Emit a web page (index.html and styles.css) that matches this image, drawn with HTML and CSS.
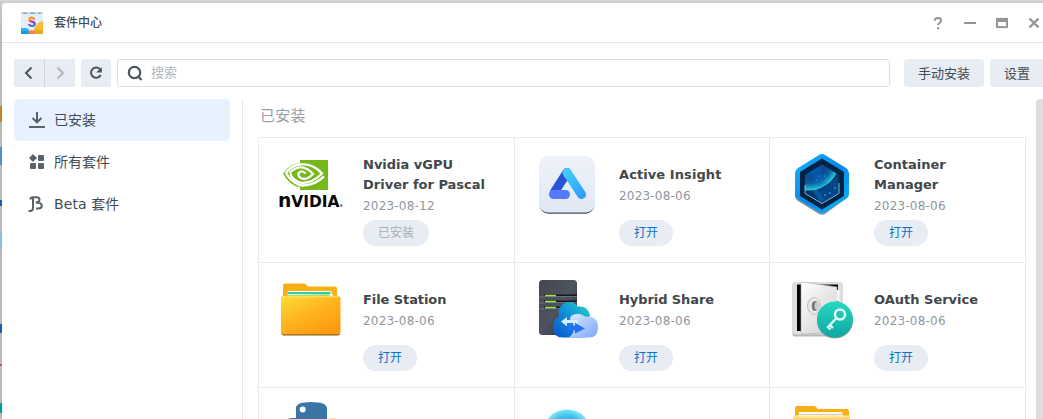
FILE: index.html
```html
<!DOCTYPE html>
<html lang="zh-CN">
<head>
<meta charset="utf-8">
<title>套件中心</title>
<link rel="stylesheet" href="styles.css">
</head>
<body>
<div class="desktop">
  <i class="peek p1"></i><i class="peek p2"></i><i class="peek p3"></i><i class="peek p4"></i><i class="peek p5"></i><i class="peek p6"></i><i class="peek p7"></i>
  <main class="window">
    <header class="titlebar">
      <svg class="app-icon" viewBox="0 0 22 22">
        <defs><linearGradient id="s" gradientUnits="userSpaceOnUse" x1="8" y1="4" x2="13" y2="15"><stop offset="0" stop-color="#f45743"/><stop offset=".25" stop-color="#ffb000"/><stop offset=".5" stop-color="#e62c91"/><stop offset=".75" stop-color="#6548e8"/><stop offset="1" stop-color="#13b9dc"/></linearGradient></defs>
        <rect width="22" height="22" rx="1" fill="#e3f0f9"/><path d="M0 1h22" stroke="#b5cfda"/><path d="M2 1.200h4M9 1.200h5M17 1.200h3" stroke="#6f909f"/>
        <path d="M22 9q-6 1-9 8v2h9z" fill="#fdbb32"/><path d="M0 16.500q4-2 8 1l1 4.500H0z" fill="#28b7ed"/><path d="M7.500 19q3-1.500 7 0v3h-7z" fill="#ff8045"/><path d="M13 18.500q4-1.500 9 0V22h-7z" fill="#e5a823"/><path d="M0 19h7l1 3H0z" fill="#159bdc"/>
        <path d="M13.500 7.400Q12.800 5.600 10.800 5.600 8.300 5.600 8.300 7.500 8.300 9.100 11 9.600 13.700 10.100 13.700 12 13.700 14 11 14 8.600 14 8 12" fill="none" stroke="url(#s)" stroke-width="2.200"/>
      </svg>
      <h1>套件中心</h1>
      <svg class="controls" viewBox="0 0 112 20" fill="none" stroke="#929699" stroke-width="2">
        <path d="M3.800 7.700Q3.800 4.900 7 4.900 10.200 4.900 10.200 7.400 10.200 8.900 8.600 9.800 7.100 10.700 7.100 12.200M7.100 14v2.200"/><path d="M33 10h12"/><rect x="66" y="5.900" width="10" height="8.200"/><path d="M65 7h12" stroke-width="4"/><path d="M98.500 5.500l9 9M107.500 5.500l-9 9" stroke-width="2.400"/>
      </svg>
    </header>
    <nav class="toolbar">
      <div class="history">
        <button><svg viewBox="0 0 30 28"><path d="M17.500 8.500L12 14l5.500 5.500"/></svg></button>
        <button class="off"><svg viewBox="0 0 30 28"><path d="M12.500 8.500L18 14l-5.500 5.500"/></svg></button>
      </div>
      <button class="refresh"><svg viewBox="0 0 30 28"><path d="M18.900 10.200A5.100 5.100 0 1 0 19.700 16"/><path class="solid" d="M20.800 7.900v5.500h-5.600z"/></svg></button>
      <label class="search"><svg viewBox="0 0 18 18"><circle cx="8.500" cy="8.500" r="5.700"/><path d="M12.500 12.700l3 3.200"/></svg><span>搜索</span></label>
      <button class="manual">手动安装</button><button class="settings">设置</button>
    </nav>
    <div class="body">
      <aside>
        <a class="nav active"><svg viewBox="0 0 18 18"><path d="M9 1v10M4.600 7L9 11.400 13.400 7M1 15.900h16"/></svg><span>已安装</span></a>
        <a class="nav"><svg viewBox="0 0 18 18"><path class="fill" d="M5 1l4 4-4 4-4-4zM11 2h4q1 0 1 1v4q0 1-1 1h-4q-1 0-1-1V3q0-1 1-1zM3 10h4q1 0 1 1v4q0 1-1 1H3q-1 0-1-1v-4q0-1 1-1zM11 10h4q1 0 1 1v4q0 1-1 1h-4q-1 0-1-1v-4q0-1 1-1z"/></svg><span>所有套件</span></a>
        <a class="nav"><svg viewBox="0 0 18 18"><path d="M.5 15.900H2q3 0 3-3V2.200M2.500 4.500q0-2.300 2.500-2.300h3.800q2.700 0 2.700 2.500 0 2.800-3.700 2.800 6 0 6 3.200 0 2.800-3.500 2.800H8"/></svg><span class="beta">Beta 套件</span></a>
      </aside>
      <section class="content">
        <h2>已安装</h2>
        <div class="grid">
          <article class="card">
            <svg class="logo" viewBox="0 0 64 64">
              <path d="M21 8h28v30H21z" fill="#76b71b"/>
              <path d="M4 21.500Q11 11.500 21 11v24.500Q10 33 4 21.500z" fill="#76b71b"/>
              <g fill="none" stroke="#fff"><path d="M21 12.500Q34 11 43 21.500 33 31.500 22 31 13 28 11.300 21.500" stroke-width="2.300"/><path d="M21 12.200Q12 13.500 7 21q4.500 8.500 14 12.300 14 1 24-9" stroke-width="2.500"/><path d="M10.500 21Q19 12.500 28 17q4 2.200 6 5-7 7-12.300 4-3.200-2.200-2-5 3.300-3.500 7 .5" stroke-width="2.200"/></g>
              <text class="wordmark" x="-1" y="54.700" textLength="61.500" lengthAdjust="spacingAndGlyphs"><tspan class="small">n</tspan>VIDIA</text><circle cx="62.300" cy="53.500" r="1.200" fill="#666"/>
            </svg>
            <div class="info"><div class="text"><h3>Nvidia vGPU<br>Driver for Pascal</h3><time>2023-08-12</time></div><button class="pill disabled">已安装</button></div>
          </article>
          <article class="card">
            <svg class="logo" viewBox="0 0 64 64">
              <defs><linearGradient id="tile" x2="0" y2="1"><stop stop-color="#eff3f9"/><stop offset="1" stop-color="#dfe8f5"/></linearGradient><linearGradient id="al" x2="1" y2="1"><stop stop-color="#43cdfa"/><stop offset="1" stop-color="#319eff"/></linearGradient></defs>
              <rect x="4.500" y="6" width="55" height="55.700" rx="9" fill="#454e59"/><rect x="4" y="4" width="56" height="56.500" rx="9" fill="url(#tile)"/>
              <g fill="none" stroke-linecap="round" stroke-width="9"><path d="M32 20.500L19.500 40" stroke="#2854d5"/><path d="M18.500 42.500h12" stroke="#537aff"/><path d="M32 20.500L46.500 42.500" stroke="url(#al)"/></g>
            </svg>
            <div class="info"><div class="text"><h3 class="ai">Active Insight</h3><time>2023-08-06</time></div><button class="pill">打开</button></div>
          </article>
          <article class="card">
            <svg class="logo" viewBox="0 0 64 64">
              <defs><linearGradient id="hex" x2="1" y2="1"><stop stop-color="#17b8fa"/><stop offset=".5" stop-color="#0686ed"/><stop offset="1" stop-color="#10b9f1"/></linearGradient><radialGradient id="orb" gradientUnits="userSpaceOnUse" cx="19" cy="8" r="31"><stop stop-color="#0867c8"/><stop offset=".55" stop-color="#084a96"/><stop offset=".76" stop-color="#0b60a2"/><stop offset="1" stop-color="#22dadd"/></radialGradient><clipPath id="hc"><path d="M32 13l17 10v18L32 51 15 41V23z"/></clipPath></defs>
              <path d="M32 4.500l24 14q3 2 3 5v18q0 3-3 5L35 62q-3 1.500-6 0L8 49q-3-2-3-5V22z" fill="#244c70" opacity=".6"/>
              <path d="M29 3q3-2 6 0l21 13q3 2 3 5v21q0 3-3 5L35 60q-3 2-6 0L8 47q-3-2-3-5V21q0-3 3-5z" fill="url(#hex)"/>
              <path d="M32 6.500l22 13.500v24L32 57.500 10 44V20z" fill="#032342"/><path d="M32 12l17 10.500v19L32 51.500 15 41.500v-19z" fill="#063468"/>
              <g clip-path="url(#hc)"><path d="M30 39l17-14 3 18-18 9z" fill="#074589"/><path d="M22 38l8 12 4-2-6-11z" fill="#0a579d"/><circle cx="19" cy="8" r="30.500" fill="url(#orb)"/><path d="M19 19l10-5 8 18-8 4z" fill="#0870c8" opacity=".25"/></g>
              <path d="M15 33v8.500l17 10 17-10V31" fill="none" stroke="#7ab6df"/><g fill="#39c7ff"><circle cx="29" cy="24" r=".6"/><circle cx="35" cy="24" r=".6"/><circle cx="27" cy="28" r=".6"/><circle cx="40" cy="41" r=".8"/><circle cx="45" cy="36" r=".8"/><circle cx="35" cy="43" r=".8"/></g>
            </svg>
            <div class="info"><div class="text"><h3 class="cm">Container<br>Manager</h3><time>2023-08-06</time></div><button class="pill">打开</button></div>
          </article>
          <article class="card">
            <svg class="logo" viewBox="0 0 64 64">
              <defs><linearGradient id="fold" x2=".7" y2="1"><stop stop-color="#ffdd38"/><stop offset=".5" stop-color="#ffb51f"/><stop offset="1" stop-color="#fe9a11"/></linearGradient></defs>
              <path d="M4 8.500Q4 6.500 6 6.500h19q2 0 3 2l1 1h27q2 0 2 2v18H4z" fill="#faae18"/><path d="M9 14h43l3 7H8z" fill="#f1fff0"/><path d="M9 15h43l-1 2H8z" fill="#35cba2"/><path d="M8 18l42-1 2 3H8z" fill="#a8dd76"/>
              <rect x="2.500" y="20.500" width="58.500" height="38" rx="2" fill="#91631c"/><rect x="2" y="19.200" width="59.500" height="38" rx="2" fill="url(#fold)"/><path d="M4 19.800h55" stroke="#ffe36a"/>
            </svg>
            <div class="info"><div class="text"><h3 class="fs">File Station</h3><time>2023-08-06</time></div><button class="pill">打开</button></div>
          </article>
          <article class="card">
            <svg class="logo" viewBox="0 0 64 64">
              <defs><linearGradient id="server" x2="1" y2="1"><stop stop-color="#40454e"/><stop offset=".5" stop-color="#4e5361"/><stop offset="1" stop-color="#292c36"/></linearGradient><linearGradient id="c1" x1="1" x2="0" y2="1"><stop stop-color="#25d8c4"/><stop offset=".45" stop-color="#1294d9"/><stop offset="1" stop-color="#0753c9"/></linearGradient><linearGradient id="c2" x2="1" y2="1"><stop stop-color="#d9eaff"/><stop offset="1" stop-color="#7ca6fd"/></linearGradient></defs>
              <rect x="4" y="3" width="38" height="55" rx="3.500" fill="url(#server)"/><path d="M9 18.500h33M9 24.500h33M9 30.500h33" stroke="#14171d" stroke-width="2"/><path d="M4 20h5l1.500-.5h31.500M4 26h5l1.500-.5h31.500M4 32h5l1.500-.5h31.500" fill="none" stroke="#7b818b" stroke-width=".8"/><path d="M10 18.500h11M10 24.500h11M10 30.500h11" stroke="#9bea35" stroke-width="1.500"/>
              <path d="M28 60.500q-10 0-10-10 0-8 6-11-2-9 5-13 8-4 14 3 10-1 12 9l-4 22z" fill="url(#c1)"/><path d="M34 60.500q5-4 5-9 0-6-4-9 0-4 4-5 6-2 11 2 13-1 13 11 0 10-9 10z" fill="url(#c2)"/><path d="M26 44.500l6-4.500v3h11v3H32v3.500z" fill="#d9ecff"/><path d="M31 49h9v-3l10 5.500-10 5V53h-9z" fill="#2170f4"/>
            </svg>
            <div class="info"><div class="text"><h3 class="hs">Hybrid Share</h3><time>2023-08-06</time></div><button class="pill">打开</button></div>
          </article>
          <article class="card">
            <svg class="logo" viewBox="0 0 64 64">
              <defs><linearGradient id="safe" x2="1" y2="1"><stop stop-color="#fff"/><stop offset="1" stop-color="#cecece"/></linearGradient><linearGradient id="badge" x2="0" y2="1"><stop stop-color="#25dac1"/><stop offset="1" stop-color="#0fa6a2"/></linearGradient></defs>
              <rect x="2.500" y="5.500" width="50" height="54" rx="2.500" fill="#b8b8b8"/><rect x="3" y="5" width="49" height="52.500" rx="2" fill="#dedede"/><path d="M7 7.500h41V54H7z" fill="#080808"/><path d="M11 7q0-2 2-2l34 5v45l-33 2q-3 0-3-3z" fill="url(#safe)" stroke="#aaa" stroke-width=".6"/><path d="M48 13v11" stroke="#f5f5f5" stroke-width="3"/><ellipse cx="24" cy="29" rx="6.500" ry="8.500" fill="#e5e5e5" stroke="#c2c2c2"/><ellipse cx="25" cy="29" rx="4" ry="5.500" fill="#777" stroke="#fff"/><ellipse cx="27" cy="29" rx="2.500" ry="4" fill="#ccc"/>
              <circle cx="45" cy="43.500" r="18" fill="#546d6b" opacity=".6"/><circle cx="45" cy="42.500" r="18" fill="url(#badge)"/><g fill="none" stroke="#e3fffc" stroke-width="2.400"><circle cx="50" cy="37.500" r="5"/><path d="M46.500 41L37 51m3-3l3 3m-5-1l2.500 2.500"/></g>
            </svg>
            <div class="info"><div class="text"><h3 class="oauth">OAuth Service</h3><time>2023-08-06</time></div><button class="pill">打开</button></div>
          </article>
          <article class="card"><svg class="logo" viewBox="0 0 64 64"><path d="M17 18V6Q17 0 32 0T48 6v22H17z" fill="#3b75a8"/><path d="M8 17.500q2-1.500 6-1.500h18v2H8z" fill="#3b75a8"/><path d="M50 16h7v4h-7z" fill="#ffe58b"/><circle cx="23.700" cy="7.500" r="3" fill="#fff"/></svg></article>
          <article class="card"><svg class="logo" viewBox="0 0 64 64"><defs><radialGradient id="ring"><stop stop-color="#1bb7ed"/><stop offset=".7" stop-color="#32bdee"/><stop offset="1" stop-color="#7be7f7"/></radialGradient></defs><circle cx="32" cy="32" r="24.500" fill="url(#ring)"/></svg></article>
          <article class="card"><svg class="logo" viewBox="0 0 64 64"><path d="M5 6q0-2 2-2h17q2 0 3 2l1 1h29q2 0 2 2v20H5z" fill="#faae18"/><path d="M9 10h43l2 6H8z" fill="#fffbed"/><path d="M8 12.500h45" stroke="#d8d0b5"/><path d="M3 15.500h57V50H3z" fill="#ffd23e"/><path d="M3 14.500h57" stroke="#ffeb8a" stroke-width="2"/></svg></article>
        </div>
      </section>
      <div class="scrollbar"></div>
    </div>
  </main>
</div>
</body>
</html>
```
FILE: styles.css
```css
* { box-sizing: border-box; }
body { margin: 0; overflow: hidden; font-family: "DejaVu Sans", "Noto Sans CJK SC", sans-serif; color: #414b55; }
h1, h2, h3 { margin: 0; font-weight: normal; }
button { border: 0; padding: 0; color: inherit; font: inherit; background: #e8edf3; }
svg { display: block; flex: none; }
.desktop { position: relative; height: 419px; padding: 3px 0 0 2px; background: linear-gradient(#d9d9d9, #c9c9c9 3px, #b9b9b9 40px); overflow: hidden; }
.peek { position: absolute; left: 0; width: 2px; background: #558bcf; }
.p1 { top: 106px; height: 16px; background: #bd872d; } .p2 { top: 147px; height: 18px; }
.p3 { top: 200px; height: 6px; background: #185bb0; } .p4 { top: 232px; height: 17px; background: #8bbedd; }
.p5 { top: 324px; height: 9px; background: #185bc2; } .p6 { top: 364px; height: 2px; background: #bf5959; }
.p7 { top: 403px; height: 10px; background: #079c9d; }
.window { width: 1041px; height: 416px; background: #fff; border-radius: 3px 0 0; overflow: hidden; }
.titlebar { display: flex; align-items: center; height: 40px; padding-left: 19px; border-bottom: 1px solid #e3e6e8; }
.app-icon { width: 22px; height: 22px; margin-top: 1px; }
h1 { margin-left: 11px; font-size: 12px; font-weight: 500; line-height: 20px; }
.controls { width: 112px; height: 20px; margin-left: auto; }
.toolbar { display: flex; height: 44px; padding: 16px 0 0 12px; font-size: 13px; }
.toolbar > * { flex: none; }
.history { display: flex; gap: 1px; width: 61px; height: 28px; border-radius: 3px; overflow: hidden; background: #ced5db; }
.history button { width: 30px; }
.toolbar button svg { width: 30px; height: 28px; fill: none; stroke: #4b555e; stroke-width: 2; }
.toolbar .off svg { stroke: #b0b7bd; }
.toolbar .solid { fill: #4b555e; stroke: none; }
.refresh { width: 30px; margin-left: 6px; border-radius: 3px; }
.search { display: flex; align-items: center; width: 773px; height: 28px; margin-left: 6px; padding-left: 8px; border: 1px solid #d7e0e6; border-radius: 3px; color: #aeb5bb; }
.search svg { width: 18px; height: 18px; fill: none; stroke: #4b555e; stroke-width: 2.200; }
.search span { margin-left: 7px; line-height: 24px; }
.manual, .settings { line-height: 27px; border-radius: 3px; height: 28px; }
.manual { width: 80px; margin-left: 14px; }
.settings { width: 54px; margin-left: 6px; border-radius: 3px 0 0 3px; }
.body { display: flex; height: 332px; padding: 12px 0 0 12px; }
aside { width: 229px; flex: none; border-right: 1px solid #e6e8ea; }
.nav { display: flex; align-items: center; width: 216px; height: 42px; padding-left: 14px; border-radius: 5px; font-size: 14px; line-height: 22px; }
.nav.active { background: #e6f1fd; }
.nav svg { width: 18px; height: 18px; fill: none; stroke: #59636b; stroke-width: 2; }
.nav .fill { fill: #59636b; stroke: none; }
.nav span { margin-left: 8px; }
.nav .beta { letter-spacing: .1px; }
.content { padding-left: 15px; }
h2 { height: 38px; padding: 5px 0 0 2px; font-size: 15px; line-height: 24px; letter-spacing: .2px; color: #969da4; }
.grid { display: grid; grid-template-columns: 256px 255px 256px; grid-auto-rows: 125px; border-top: 1px solid #ebebeb; border-left: 1px solid #ebebeb; width: 768px; }
.card { display: flex; padding: 14px 0 0 20px; border-right: 1px solid #ebebeb; border-bottom: 1px solid #ebebeb; }
.logo { width: 64px; height: 64px; overflow: visible; }
.wordmark { font: bold 16.500px "DejaVu Sans", sans-serif; fill: #080808; }
.wordmark .small { font-size: 20px; }
.info { margin-left: 20px; }
.text { display: flex; flex-direction: column; justify-content: center; height: 66px; margin-bottom: 2px; }
h3 { font-size: 13px; line-height: 20px; font-weight: bold; white-space: nowrap; color: #42474b; }
h3.ai { letter-spacing: .08px; }
h3.fs, h3.hs { letter-spacing: -.08px; }
time { font-size: 12px; line-height: 20px; padding-top: 1px; margin-bottom: -1px; letter-spacing: .2px; color: #91969b; }
.pill { display: block; min-width: 54px; height: 26px; padding: 0 15px; border-radius: 13px; font-size: 12px; line-height: 25px; color: #0873c7; }
.disabled { color: #a9b0b7; }
.scrollbar { width: 7px; height: 320px; margin-left: 10px; background: #dedede; border-radius: 4px 0 0; flex: none; }
```
